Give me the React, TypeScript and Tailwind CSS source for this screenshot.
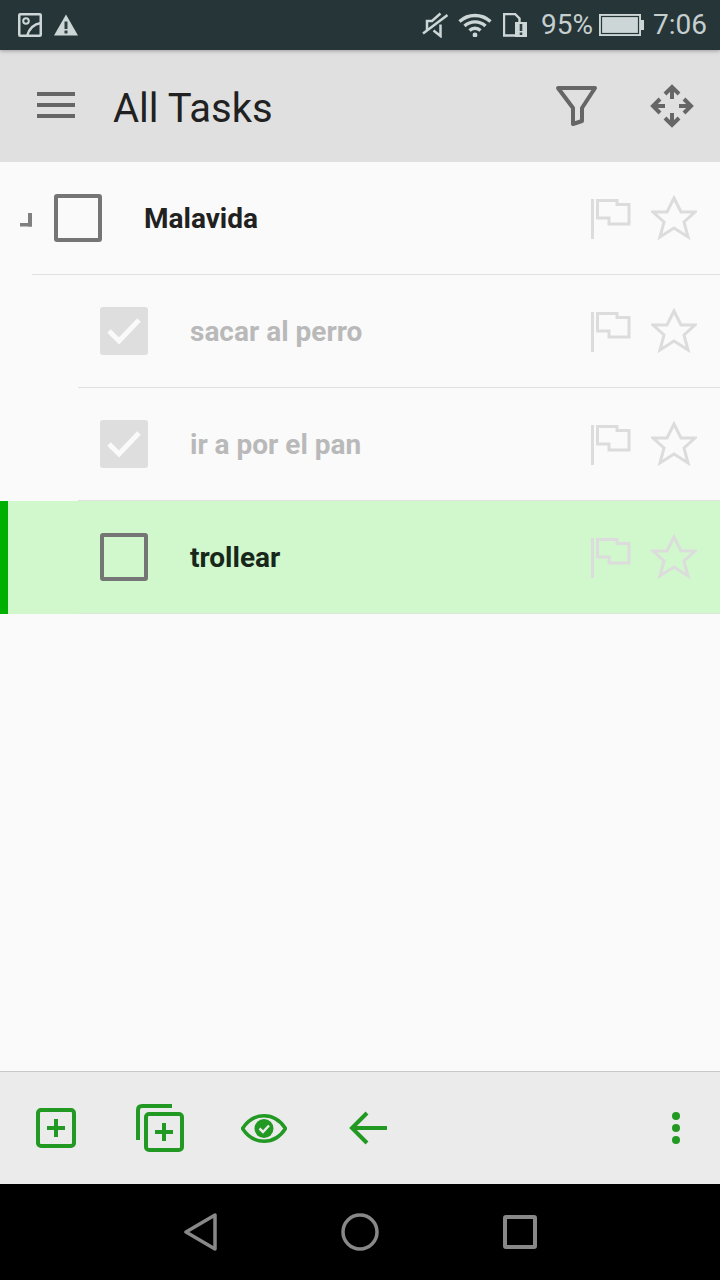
const tasks = [
  { id: 1, label: "Malavida", indent: "w-[32px]", gap: "ml-[22px]", done: false, selected: false, branch: true },
  { id: 2, label: "sacar al perro", indent: "w-[78px]", gap: "ml-[22px]", done: true, selected: false, branch: false },
  { id: 3, label: "ir a por el pan", indent: "w-[78px]", gap: "ml-[22px]", done: true, selected: false, branch: false },
  { id: 4, label: "trollear", indent: "w-[78px]", gap: "ml-[22px]", done: false, selected: true, branch: false }
];

function StatusBar() {
  return (
    <div className="relative z-10 flex h-[50px] shrink-0 items-center bg-[#263538] pl-[18px] pr-[13px] text-[28px] leading-none text-[#c5cfcf] shadow-[0_1px_4px_rgba(0,0,0,0.3)]">
      <svg width="24" height="24" viewBox="0 0 24 24" fill="none" stroke="#ccd6d6">
        <rect x="1.25" y="1.25" width="21.5" height="21.5" rx="1" strokeWidth="2.5" />
        <circle cx="8" cy="8" r="2.8" strokeWidth="2" />
        <path d="M9 23C11 16 16 11 23 10" strokeWidth="2.5" />
      </svg>
      <svg className="ml-[12px]" width="24" height="24" viewBox="0 0 24 24">
        <path d="M12 1.5 24 22.5H0Z" fill="#ccd6d6" />
        <path d="M10.5 8.5h3v7.5h-3zM10.5 17.5h3v3h-3z" fill="#2f3f42" />
      </svg>

      <svg className="ml-auto" width="26" height="26" viewBox="0 0 26 26" fill="none" stroke="#ccd6d6" strokeWidth="2.5">
        <path d="M1 21.5 25.5 3" />
        <path d="M5 18V9H10L18.5 1.5" />
        <path d="M18.5 12.5V24L11.5 18.5" />
      </svg>
      <svg className="ml-[10px]" width="34" height="24" viewBox="0 0 34 24" fill="none" stroke="#ccd6d6" strokeWidth="3.4">
        <path d="M1.5 8.5A23 23 0 0 1 32.5 8.5" />
        <path d="M6.5 13A15.5 15.5 0 0 1 27.5 13" />
        <path d="M11.5 17.5A8 8 0 0 1 22.5 17.5" />
        <circle cx="17" cy="22" r="2.4" fill="#ccd6d6" strokeWidth="0" />
      </svg>
      <svg className="ml-[11px]" width="24" height="24" viewBox="0 0 24 24">
        <path d="M1 1H12L16.5 5.5V22.5H1Z" fill="none" stroke="#ccd6d6" strokeWidth="2.4" />
        <rect x="12" y="9" width="12" height="15" fill="#ccd6d6" />
        <path d="M16.7 11h2.6v7h-2.6zM16.7 19.5h2.6v2.6h-2.6z" fill="#2f3f42" />
      </svg>
      <span className="ml-[14px] font-['Roboto',sans-serif]">95%</span>
      <svg className="ml-[6px]" width="45" height="22" viewBox="0 0 45 22">
        <rect x="1" y="1" width="40" height="20" fill="#ccd6d6" stroke="#ccd6d6" strokeWidth="2" />
        <rect x="2.5" y="2.5" width="37" height="17" fill="none" stroke="#263538" strokeWidth="1.2" />
        <rect x="42" y="6" width="3" height="10" fill="#ccd6d6" />
      </svg>
      <span className="ml-[9px] font-['Roboto',sans-serif]">7:06</span>
    </div>
  );
}

function TopBar() {
  return (
    <div className="flex h-[112px] shrink-0 items-center bg-[#e0e0e0] pl-[37px] pr-[26px]">
      <div className="mb-[2px] flex w-[38px] flex-col gap-[7px]">
        <div className="h-[4px] bg-[#666666]" />
        <div className="h-[4px] bg-[#666666]" />
        <div className="h-[4px] bg-[#666666]" />
      </div>
      <h1 className="ml-[38px] mt-[5px] font-['Roboto',sans-serif] text-[40px] font-normal leading-none text-[#212121]">All Tasks</h1>
      <svg className="ml-auto" width="42" height="42" viewBox="0 0 42 42" fill="none" stroke="#666666" strokeWidth="4" strokeLinejoin="round">
        <path d="M3 3H40L27 23V36L18 39V23Z" />
      </svg>
      <svg className="ml-[53px]" width="44" height="44" viewBox="0 0 44 44" fill="none" stroke="#666666" strokeWidth="4">
        <path d="M22 15V4M15 10l7-7 7 7" />
        <path d="M22 29V40M15 34l7 7 7-7" />
        <path d="M15 22H4M10 15l-7 7 7 7" />
        <path d="M29 22H40M34 15l7 7-7 7" />
      </svg>
    </div>
  );
}

function Flag() {
  return (
    <svg width="40" height="41" viewBox="0 0 40 41" fill="none" stroke="#dcdcdc" strokeWidth="3">
      <path d="M1.5 1V41" />
      <path d="M6.5 2.5H26V6.5H38V26H18V20H6.5Z" />
    </svg>
  );
}

function Star() {
  return (
    <svg className="ml-[20px]" width="46" height="46" viewBox="0 0 46 46" fill="none" stroke="#dcdcdc" strokeWidth="3">
      <path d="M23 3 30 17H44L33 27 37 42 23 33 9 42 13 27 2 17H16Z" />
    </svg>
  );
}

function Checkbox({ done }: { done: boolean }) {
  if (done) {
    return (
      <div className="flex h-[48px] w-[48px] shrink-0 items-center justify-center rounded-[3px] bg-[#dedede]">
        <svg width="36" height="30" viewBox="0 0 36 30" fill="none" stroke="#fafafa" strokeWidth="5">
          <path d="M3 15 13 25 33 4" />
        </svg>
      </div>
    );
  }
  return <div className="h-[48px] w-[48px] shrink-0 rounded-[3px] border-[4px] border-[#757575]" />;
}

function TaskRow({ task }: { task: (typeof tasks)[number] }) {
  return (
    <div className={`relative flex h-[113px] ${task.selected ? "bg-[#d0f8cc]" : ""}`}>
      {task.selected && <div className="absolute bottom-0 left-0 top-0 w-[8px] bg-[#00b000]" />}
      <div className={`flex shrink-0 items-center ${task.indent}`}>
        {task.branch && <div className="ml-[20px] mt-[2px] h-[14px] w-[14px] border-b-[4px] border-r-[4px] border-[#808080] [clip-path:polygon(60%_0,100%_0,100%_100%,0_100%,0_60%,60%_60%)]" />}
      </div>
      <div className={`flex flex-1 items-center border-b pr-[23px] ${task.selected ? "border-[#dde8da]" : "border-[#e0e0e0]"}`}>
        <div className={`flex items-center ${task.gap}`}>
          <Checkbox done={task.done} />
          <span className={`ml-[42px] mt-[2px] font-['Roboto',sans-serif] text-[28px] font-bold leading-none ${task.done ? "text-[#b9b9b9]" : task.selected ? "text-[#17271a]" : "text-[#212121]"}`}>
            {task.label}
          </span>
        </div>
        <div className="ml-auto flex items-center">
          <Flag />
          <Star />
        </div>
      </div>
    </div>
  );
}

function BottomBar() {
  return (
    <div className="flex h-[113px] shrink-0 items-center border-t border-[#c8c8c8] bg-[#ebebeb] pl-[36px] pr-[40px]">
      <svg width="40" height="40" viewBox="0 0 40 40" fill="none" stroke="#229922" strokeWidth="4">
        <rect x="2" y="2" width="36" height="36" rx="3" />
        <path d="M20 11V29M11 20H29" />
      </svg>
      <svg className="ml-[60px]" width="48" height="48" viewBox="0 0 48 48" fill="none" stroke="#229922" strokeWidth="4">
        <path d="M2 36V6Q2 2 6 2H36" />
        <rect x="10" y="10" width="36" height="36" rx="3" />
        <path d="M28 19V37M19 28H37" />
      </svg>
      <svg className="ml-[57px]" width="46" height="29" viewBox="0 0 46 29" fill="none" stroke="#229922" strokeWidth="3.5">
        <path d="M1.5 14.5C7 6 14 1.75 23 1.75S39 6 44.5 14.5C39 23 32 27.25 23 27.25S7 23 1.5 14.5Z" />
        <circle cx="23" cy="14.5" r="9.5" fill="#229922" strokeWidth="0" />
        <path d="M18.5 14.5 22 18 28 11.5" stroke="#ebebeb" strokeWidth="2.5" />
      </svg>
      <svg className="ml-[62px]" width="38" height="34" viewBox="0 0 38 34" fill="none" stroke="#229922" strokeWidth="4">
        <path d="M38 17H3M18 2 3 17 18 32" />
      </svg>
      <div className="ml-auto flex flex-col gap-[4px]">
        <div className="h-[8px] w-[8px] rounded-full bg-[#229922]" />
        <div className="h-[8px] w-[8px] rounded-full bg-[#229922]" />
        <div className="h-[8px] w-[8px] rounded-full bg-[#229922]" />
      </div>
    </div>
  );
}

function NavBar() {
  return (
    <div className="flex h-[96px] shrink-0 items-center bg-black pl-[184px] pr-[183px]">
      <svg width="33" height="38" viewBox="0 0 33 38" fill="none" stroke="#888888" strokeWidth="3.5" strokeLinejoin="round">
        <path d="M2 19 31 2V36Z" />
      </svg>
      <svg className="ml-[124px]" width="38" height="38" viewBox="0 0 38 38" fill="none" stroke="#888888" strokeWidth="3.5">
        <circle cx="19" cy="19" r="17" />
      </svg>
      <div className="ml-auto h-[34px] w-[34px] rounded-[3px] border-[4px] border-[#888888]" />
    </div>
  );
}

export default function App() {
  return (
    <div className="flex h-[1280px] w-[720px] flex-col overflow-hidden bg-[#fafafa]">
      <StatusBar />
      <TopBar />
      <div className="flex-1">
        {tasks.map((task) => (
          <TaskRow key={task.id} task={task} />
        ))}
      </div>
      <BottomBar />
      <NavBar />
    </div>
  );
}
